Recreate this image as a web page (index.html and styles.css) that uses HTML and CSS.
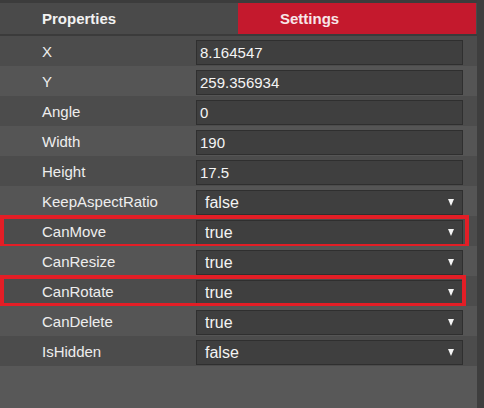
FILE: index.html
```html
<!DOCTYPE html>
<html>
<head>
<meta charset="utf-8">
<link rel="stylesheet" href="styles.css">
</head>
<body>
<div class="frame">
  <div class="panel">
    <div class="tabs">
      <div class="tab tab-props">Properties</div>
      <div class="tab tab-settings">Settings</div>
    </div>
    <div class="rows">
      <div class="row dark"><div class="label">X</div><div class="value"><div class="field">8.164547</div></div></div>
      <div class="row light"><div class="label">Y</div><div class="value"><div class="field">259.356934</div></div></div>
      <div class="row dark"><div class="label">Angle</div><div class="value"><div class="field">0</div></div></div>
      <div class="row light"><div class="label">Width</div><div class="value"><div class="field">190</div></div></div>
      <div class="row dark"><div class="label">Height</div><div class="value"><div class="field">17.5</div></div></div>
      <div class="row light"><div class="label">KeepAspectRatio</div><div class="value"><div class="field select"><span>false</span><i class="arrow"></i></div></div></div>
      <div class="row dark"><div class="label">CanMove</div><div class="value"><div class="field select"><span>true</span><i class="arrow"></i></div></div><div class="mark mark-move"></div></div>
      <div class="row light"><div class="label">CanResize</div><div class="value"><div class="field select"><span>true</span><i class="arrow"></i></div></div></div>
      <div class="row dark"><div class="label">CanRotate</div><div class="value"><div class="field select"><span>true</span><i class="arrow"></i></div></div><div class="mark mark-rotate"></div></div>
      <div class="row light"><div class="label">CanDelete</div><div class="value"><div class="field select"><span>true</span><i class="arrow"></i></div></div></div>
      <div class="row dark"><div class="label">IsHidden</div><div class="value"><div class="field select"><span>false</span><i class="arrow"></i></div></div></div>
    </div>
  </div>
  <div class="edge"></div>
</div>
</body>
</html>
```

FILE: styles.css
```css
html, body {
  margin: 0;
  padding: 0;
  background: #3c3c3c;
}
body {
  font-family: "Liberation Sans", Arial, sans-serif;
  color: #f0f0f0;
}
.frame {
  display: flex;
  width: 484px;
  height: 408px;
  overflow: hidden;
}
.panel {
  width: 477px;
  height: 405px;
  margin-top: 3px;
  background: #585858;
  display: flex;
  flex-direction: column;
}
.edge {
  flex: 1;
  background: #3e3e3e;
}
.tabs {
  display: flex;
  height: 31px;
  border-bottom: 2px solid #3b3b3b;
  background: #4a4a4a;
  padding-right: 1px;
}
.tab {
  display: flex;
  align-items: center;
  padding-left: 42px;
  font-size: 15px;
  font-weight: bold;
  color: #f2f2f2;
  box-sizing: border-box;
}
.tab-props {
  width: 238px;
  background: #4a4a4a;
}
.tab-settings {
  flex: 1;
  background: #c4192d;
  color: #f7e6e8;
}
.rows {
  display: flex;
  flex-direction: column;
}
.row {
  position: relative;
  display: flex;
  height: 30px;
}
.row.dark { background: #4c4c4c; }
.row.light { background: #555555; }
.label {
  width: 188px;
  box-sizing: border-box;
  padding-left: 42px;
  font-size: 15px;
  line-height: 32px;
  color: #eeeeee;
}
.value {
  padding: 4px 0 1px 8px;
}
.field {
  width: 267px;
  height: 25px;
  box-sizing: border-box;
  background: #3f3f3f;
  border: 1px solid #2f2f2f;
  padding: 0 8px 0 3px;
  font-size: 15px;
  line-height: 24px;
  color: #f4f4f4;
  display: flex;
  align-items: center;
  justify-content: space-between;
}
.field.select {
  padding-left: 8px;
  font-size: 16px;
}
.arrow {
  width: 0;
  height: 0;
  border-left: 3.5px solid transparent;
  border-right: 3.5px solid transparent;
  border-top: 7px solid #f4f4f4;
}
.mark {
  position: absolute;
  left: 0;
  border: 4px solid #e31e26;
  box-sizing: border-box;
  pointer-events: none;
}
.mark-move {
  top: -1px;
  width: 469px;
  height: 33px;
}
.mark-rotate {
  top: -1px;
  width: 466px;
  height: 32px;
}
```
